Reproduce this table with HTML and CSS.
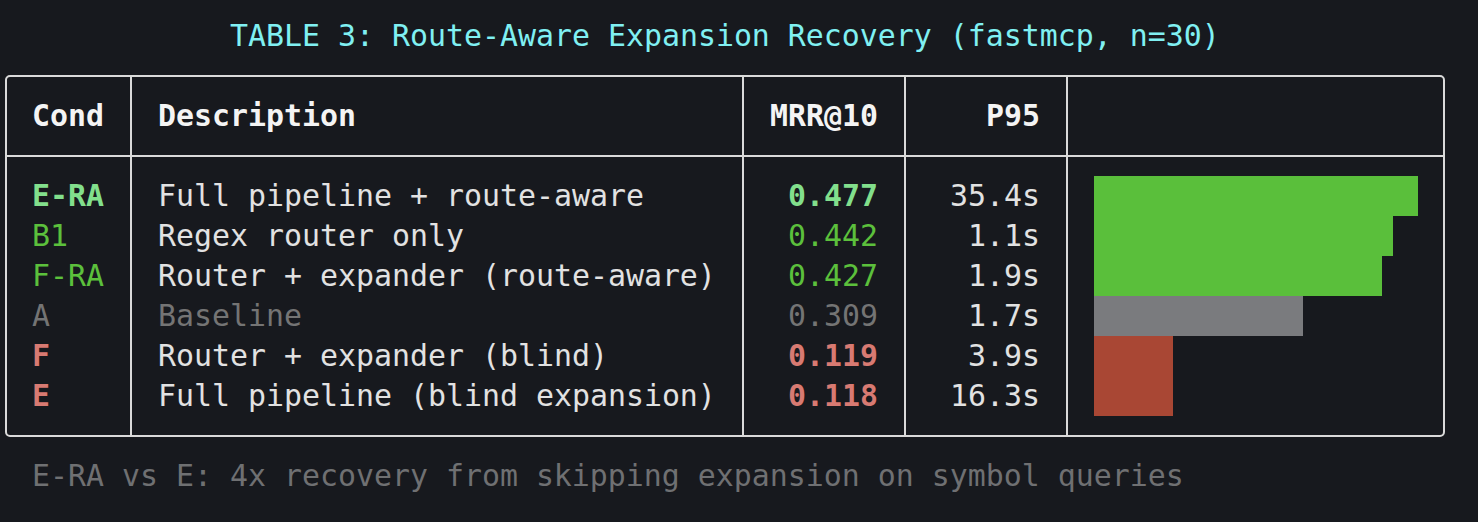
FILE: index.html
```html
<!DOCTYPE html>
<html lang="en">
<head>
<meta charset="utf-8">
<title>Route-Aware Expansion Recovery</title>
<link rel="stylesheet" href="styles.css">
</head>
<body>
<main class="screen">
  <h1 class="title">TABLE 3: Route-Aware Expansion Recovery (fastmcp, n=30)</h1>
  <div class="table">
    <div class="th cell">Cond</div>
    <div class="th cell">Description</div>
    <div class="th cell num">MRR@10</div>
    <div class="th cell num">P95</div>
    <div class="th cell last"></div>

    <div class="col cell">
      <div class="line bold c-best">E-RA</div>
      <div class="line c-good">B1</div>
      <div class="line c-good">F-RA</div>
      <div class="line c-dim">A</div>
      <div class="line bold c-bad">F</div>
      <div class="line bold c-bad">E</div>
    </div>
    <div class="col cell">
      <div class="line">Full pipeline + route-aware</div>
      <div class="line">Regex router only</div>
      <div class="line">Router + expander (route-aware)</div>
      <div class="line c-dim">Baseline</div>
      <div class="line">Router + expander (blind)</div>
      <div class="line">Full pipeline (blind expansion)</div>
    </div>
    <div class="col cell num">
      <div class="line bold c-best">0.477</div>
      <div class="line c-good">0.442</div>
      <div class="line c-good">0.427</div>
      <div class="line c-dim">0.309</div>
      <div class="line bold c-bad">0.119</div>
      <div class="line bold c-bad">0.118</div>
    </div>
    <div class="col cell num">
      <div class="line">35.4s</div>
      <div class="line">1.1s</div>
      <div class="line">1.9s</div>
      <div class="line">1.7s</div>
      <div class="line">3.9s</div>
      <div class="line">16.3s</div>
    </div>
    <div class="col cell last bars">
      <div class="bar-row"><div class="bar bar-good" style="width:324px"></div></div>
      <div class="bar-row"><div class="bar bar-good" style="width:299px"></div></div>
      <div class="bar-row"><div class="bar bar-good" style="width:288px"></div></div>
      <div class="bar-row"><div class="bar bar-dim" style="width:209px"></div></div>
      <div class="bar-row"><div class="bar bar-bad" style="width:79px"></div></div>
      <div class="bar-row"><div class="bar bar-bad" style="width:79px"></div></div>
    </div>
  </div>
  <p class="note">E-RA vs E: 4x recovery from skipping expansion on symbol queries</p>
</main>
</body>
</html>
```
FILE: styles.css
```css
html, body {
  margin: 0;
  padding: 0;
  background: #17191e;
}

body {
  font-family: "DejaVu Sans Mono", "Liberation Mono", monospace;
  font-size: 29.9px;
  line-height: 40px;
  color: #e2e2e2;
  width: 1478px;
  height: 522px;
  overflow: hidden;
}

.screen {
  padding-top: 16px;
}

.title {
  margin: 0;
  padding-left: 230px;
  font-size: inherit;
  font-weight: normal;
  line-height: 40px;
  color: #80f0f2;
}

.table {
  margin: 19px 0 0 5px;
  width: 1440px;
  box-sizing: border-box;
  border: 2px solid #dadada;
  border-radius: 5px;
  display: grid;
  grid-template-columns: 125px 612px 162px 162px 1fr;
}

.cell {
  box-sizing: border-box;
  border-right: 2px solid #dadada;
  padding-left: 26px;
  white-space: pre;
}

.cell:first-child,
.col:nth-child(6) {
  padding-left: 25px;
}

.cell.last {
  border-right: none;
}

.cell.num {
  padding-left: 0;
  padding-right: 26px;
  text-align: right;
}

.th {
  height: 80px;
  border-bottom: 2px solid #dadada;
  display: flex;
  align-items: center;
  font-weight: bold;
  color: #f4f4f4;
}

.th.num {
  justify-content: flex-end;
}

.col {
  padding-top: 19px;
  padding-bottom: 19px;
  display: flex;
  flex-direction: column;
}

.line {
  height: 40px;
  line-height: 40px;
}

.bold { font-weight: bold; }
.c-best { color: #82df8c; }
.c-good { color: #5cc03c; }
.c-dim { color: #747474; }
.c-bad { color: #d87a72; }

.bars {
  padding-left: 26px;
}

.bar-row {
  height: 40px;
  display: flex;
}

.bar {
  height: 40px;
}

.bar-good { background: #5abf3b; }
.bar-dim { background: #7a7b7e; }
.bar-bad { background: #a94734; }

.note {
  margin: 19px 0 0 0;
  padding-left: 32px;
  line-height: 40px;
  color: #6f7072;
}
```
